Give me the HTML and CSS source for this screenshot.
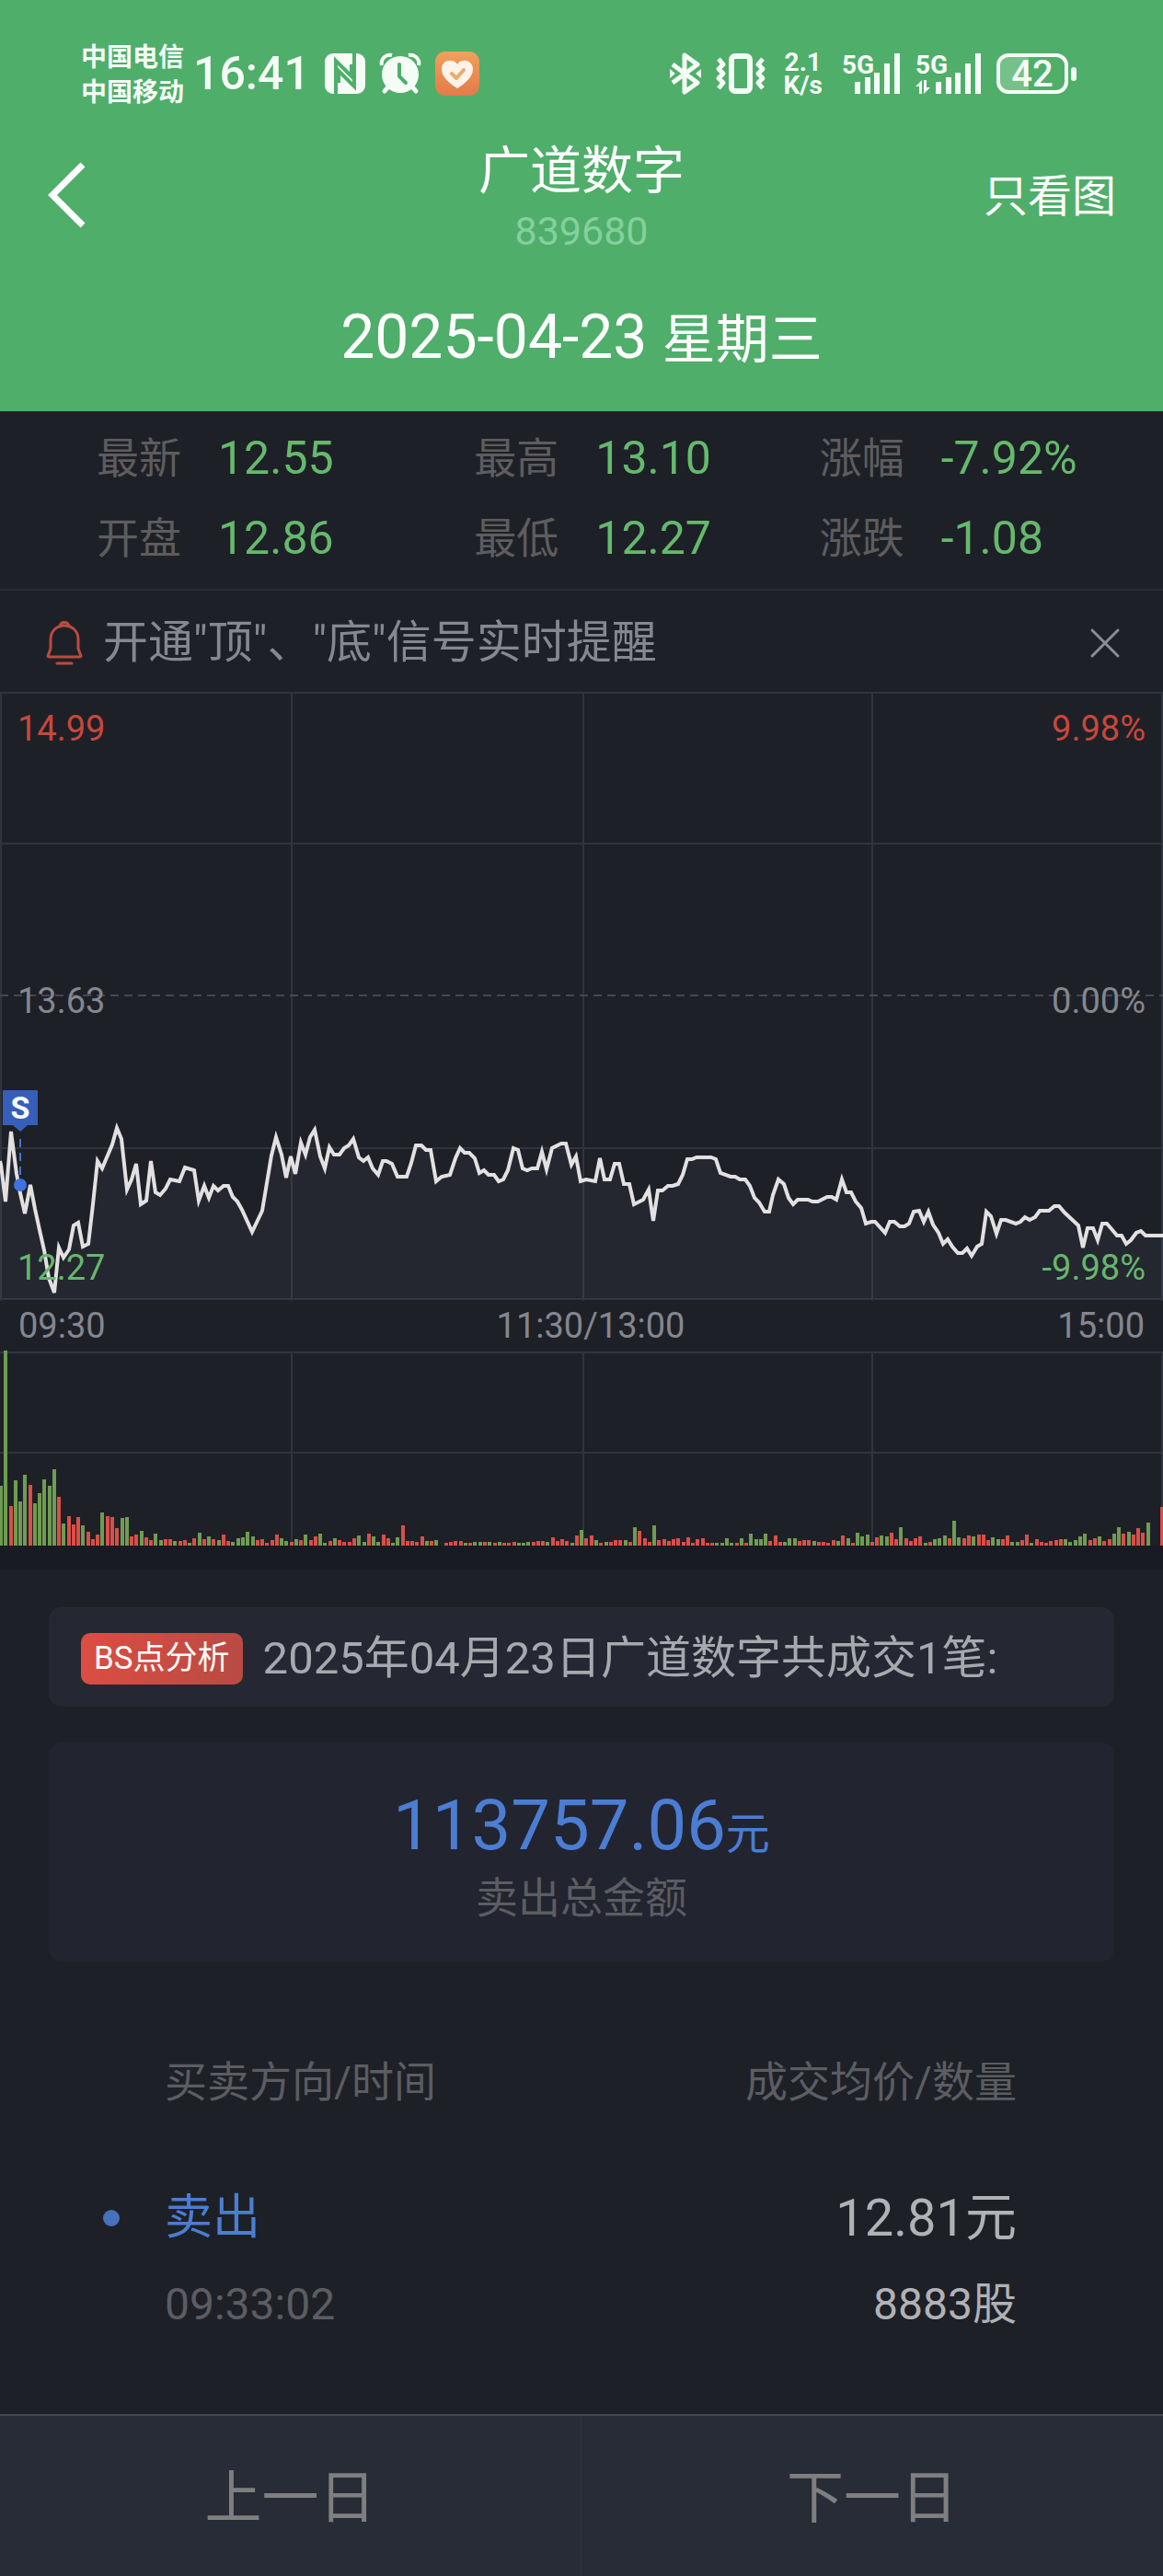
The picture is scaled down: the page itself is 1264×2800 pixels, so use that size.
FILE: index.html
```html
<!DOCTYPE html>
<html lang="zh-CN">
<head>
  <meta charset="UTF-8">
  <meta name="viewport" content="width=device-width, initial-scale=1.0">
  <title>广道数字 839680</title>
  <link rel="stylesheet" href="styles.css">
</head>
<body>
  <header class="header">
    <div class="status">
      <div class="carriers"><span>中国电信</span><span>中国移动</span></div>
      <span class="clock">16:41</span>
      <div class="status-left">
        <svg width="44" height="44" viewBox="0 0 44 44">
          <rect width="44" height="44" rx="9" fill="#f5fcf6"/>
          <path d="M12 44V8L29 25V12M32 0V36L15 19V32" fill="none" stroke="#4fae6a" stroke-width="4"/>
        </svg>
        <svg width="44" height="44" viewBox="0 0 44 44">
          <path d="M10 35L5 41M34 35l5 6" stroke="#f5fcf6" stroke-width="5" stroke-linecap="round"/>
          <circle cx="22" cy="23" r="20" fill="#f5fcf6"/>
          <path d="M2 13A9 9 0 0 1 13 2M42 13A9 9 0 0 0 31 2" fill="none" stroke="#f5fcf6" stroke-width="4"/>
          <path d="M21 12v13l7 7" fill="none" stroke="#4fae6a" stroke-width="4" stroke-linecap="round"/>
        </svg>
        <svg width="48" height="48" viewBox="0 0 48 48">
          <defs><linearGradient id="heartBg" x1="0" y1="0" x2="0" y2="1"><stop offset="0" stop-color="#efa15c"/><stop offset="1" stop-color="#e57a48"/></linearGradient></defs>
          <rect width="48" height="48" rx="11" fill="url(#heartBg)"/>
          <path d="M24 40C16 35 7 28 7 19c0-10 13-12 17-5 4-7 17-5 17 5 0 9-9 16-17 21z" fill="#fdf3ea"/>
          <path d="M18 24l5 5 8-9" fill="none" stroke="#e9ac6c" stroke-width="4" stroke-linecap="round" stroke-linejoin="round"/>
        </svg>
      </div>
      <div class="status-right">
        <svg width="34" height="44" viewBox="0 0 34 44">
          <path d="M3 12l27 20-14 10V2l14 10L3 32" fill="none" stroke="#f5fcf6" stroke-width="5" stroke-linejoin="round"/>
          <path d="M0 17l6 5-6 5zM34 17l-6 5 6 5z" fill="#f5fcf6"/>
        </svg>
        <svg width="54" height="46" viewBox="0 0 54 46">
          <rect x="17" y="4" width="20" height="38" rx="4" fill="none" stroke="#f5fcf6" stroke-width="6"/>
          <path d="M3 7l5 6-5 5 5 5-5 5 5 5-5 6M51 7l-5 6 5 5-5 5 5 5-5 5 5 6" fill="none" stroke="#f5fcf6" stroke-width="5" stroke-linejoin="round"/>
        </svg>
        <div class="net-speed"><span>2.1</span><span>K/s</span></div>
        <svg width="66" height="46" viewBox="0 0 66 46">
          <text class="net-type" x="2" y="23">5G</text>
          <path d="M19 45V32M30 45V27M40 45V22M51 45V12M62 45V1" stroke="#f5fcf6" stroke-width="6"/>
        </svg>
        <svg width="72" height="46" viewBox="0 0 72 46">
          <text class="net-type" x="0" y="23">5G</text>
          <path d="M25 45V32M36 45V27M46 45V22M57 45V12M68 45V1" stroke="#f5fcf6" stroke-width="6"/>
          <path d="M0 37l7-7v15H4v-8zM16 38l-7 7V30h3v8z" fill="#f5fcf6"/>
        </svg>
        <svg width="88" height="46" viewBox="0 0 88 46">
          <path d="M12 5H35V41H12Q4 41 4 32V14Q4 5 12 5z" fill="#76c08a"/>
          <rect x="2" y="3" width="74" height="40" rx="11" fill="none" stroke="#f5fcf6" stroke-width="4"/>
          <rect x="81" y="16" width="6" height="15" rx="3" fill="#f5fcf6"/>
          <text class="battery-level" x="39" y="37">42</text>
        </svg>
      </div>
    </div>

    <div class="nav">
      <button class="back" aria-label="返回">
        <svg width="44" height="72" viewBox="0 0 44 72"><path d="M39 3L6 36l33 33" fill="none" stroke="#fff" stroke-width="7"/></svg>
      </button>
      <div class="title">
        <h1>广道数字</h1>
        <p>839680</p>
      </div>
      <button class="only-chart">只看图</button>
    </div>
    <div class="date">2025-04-23 <span>星期三</span></div>
  </header>

  <dl class="quote">
    <div><dt>最新</dt><dd>12.55</dd></div>
    <div><dt>最高</dt><dd>13.10</dd></div>
    <div><dt>涨幅</dt><dd>-7.92%</dd></div>
    <div><dt>开盘</dt><dd>12.86</dd></div>
    <div><dt>最低</dt><dd>12.27</dd></div>
    <div><dt>涨跌</dt><dd>-1.08</dd></div>
  </dl>

  <div class="notice">
    <svg width="40" height="50" viewBox="0 0 40 50" fill="none" stroke="#bd4a3f" stroke-width="3" stroke-linecap="round" stroke-linejoin="round">
      <path d="M15 7c0-6 10-6 10 0M5 31V21C5 1 35 1 35 21V31L38 39Q38 40 36 40H4Q2 40 2 39zM12 47H28"/>
    </svg>
    <span class="notice-text">开通"顶"、"底"信号实时提醒</span>
    <button class="close" aria-label="关闭">
      <svg width="32" height="32" viewBox="0 0 32 32"><path d="M2 2l28 28M30 2L2 30" stroke="#8a8d95" stroke-width="3" stroke-linecap="round"/></svg>
    </button>
  </div>

  <section class="chart">
    <svg class="plot" viewBox="0 0 1264 662">
      <path class="grid" d="M0 1H1264M0 165H1264M0 496H1264M0 660H1264M1 0V662M317 0V662M634 0V662M948 0V662M1263 0V662"/>
      <path class="grid dashed" d="M0 330H1264"/>
      <polygon id="priceArea" class="area"/>
      <polyline id="priceLine" class="line"/>
      <path d="M22 486V530" stroke="#4672cc" stroke-width="2" stroke-dasharray="9 6"/>
      <circle cx="22" cy="536" r="7" fill="#3f72de"/>
      <path d="M4 433H40Q41 433 41 434V471H30L22 478L14 471H3V434Q3 433 4 433z" fill="#365fba"/>
      <text class="mark" x="22" y="464">S</text>
    </svg>
    <span class="tick top left up">14.99</span>
    <span class="tick top right up">9.98%</span>
    <span class="tick middle left">13.63</span>
    <span class="tick middle right">0.00%</span>
    <span class="tick bottom left down">12.27</span>
    <span class="tick bottom right down">-9.98%</span>
  </section>
  <div class="times"><span>09:30</span><span class="noon">11:30/13:00</span><span>15:00</span></div>
  <section class="volume">
    <svg class="plot" viewBox="0 0 1264 212">
      <path class="grid" d="M0 2H1264M0 111H1264M317 2V212M634 2V212M948 2V212M1263 2V212"/>
      <path id="volDown" class="vol-down"/>
      <path id="volUp" class="vol-up"/>
    </svg>
  </section>

  <main class="analysis">
    <div class="summary">
      <span class="tag">BS点分析</span>
      <span class="summary-text">2025年04月23日广道数字共成交1笔:</span>
    </div>
    <div class="amount">
      <p class="amount-value">113757.06<small>元</small></p>
      <p class="amount-label">卖出总金额</p>
    </div>
    <table class="trades">
      <thead>
        <tr><th scope="col">买卖方向/时间</th><th scope="col">成交均价/数量</th></tr>
      </thead>
      <tbody>
        <tr class="trade"><td class="side">卖出</td><td class="price">12.81元</td></tr>
        <tr class="trade-sub"><td class="time">09:33:02</td><td class="count">8883股</td></tr>
      </tbody>
    </table>
  </main>

  <footer class="pager">
    <button>上一日</button>
    <button>下一日</button>
  </footer>

  <script>
    const points = '0,510 1,514 6,554 12,478 18,524 22,545 27,567 33,536 38,562 43,585 48,607 53,637 59,653 64,604 69,615 75,606 80,580 85,577 90,603 96,600 ' +
      '101,557 106,510 111,518 122,492 127,474 132,486 138,541 143,530 148,513 153,557 159,553 164,510 169,544 174,547 180,540 185,530 195,532 201,517 211,520 216,553 ' +
      '222,537 227,550 232,537 237,542 243,537 248,537 253,549 258,554 263,563 274,587 285,564 295,504 300,484 306,503 311,528 316,505 321,524 327,490 332,503 337,484 ' +
      '342,476 348,505 353,518 358,495 363,503 369,503 374,496 379,493 384,486 390,506 395,510 400,506 405,518 411,525 416,510 420,510 426,513 432,527 442,527 447,512 ' +
      '452,493 458,493 463,498 468,498 474,532 480,527 489,525 495,507 500,496 505,501 510,501 516,507 521,523 526,520 531,525 537,525 542,532 547,530 552,520 558,496 ' +
      '563,498 568,518 573,520 578,518 584,518 589,500 594,519 600,496 610,491 615,491 621,514 626,505 631,532 637,530 647,532 652,507 657,530 663,530 668,513 673,513 ' +
      '678,535 684,535 689,557 699,552 705,541 710,575 715,542 720,542 726,537 731,537 737,535 742,525 747,508 752,508 757,506 773,506 778,508 783,523 794,527 799,527 ' +
      '804,530 810,530 815,537 820,550 825,555 831,565 836,565 840,547 846,530 852,535 857,550 862,557 867,552 878,552 883,554 889,554 899,549 904,549 909,552 915,530 ' +
      '920,544 925,544 930,554 936,561 941,578 947,576 951,576 962,588 967,576 972,576 978,581 983,581 988,578 993,565 999,564 1004,576 1009,565 1014,579 1020,588 ' +
      '1025,600 1030,595 1035,603 1041,610 1046,610 1051,605 1056,613 1062,603 1067,600 1072,565 1077,570 1083,589 1088,574 1093,574 1104,578 1109,576 1114,571 1119,574 ' +
      '1125,571 1130,564 1140,564 1146,559 1151,559 1157,566 1172,580 1177,604 1182,583 1188,583 1193,596 1198,578 1203,578 1209,585 1214,591 1219,591 1224,600 1229,596 ' +
      '1235,588 1240,586 1245,591 1264,591';
    document.getElementById('priceLine').setAttribute('points', points);
    document.getElementById('priceArea').setAttribute('points', '0,660 ' + points + ' 1264,660');

    // one bar per minute, negative = price fell
    const volumes = [
      -65, -212, 43, -71, -48, -77, 66, -46, -57, -72, -65, -83, 53, -24, 32, 23, 31, -22, 15, 7,
      12, -36, 32, 31, 19, -30, -31, 10, 12, -16, 9, 6, -13, -6, 7, 7, -5, 5, 6, -3,
      8, -14, 7, -10, 7, -6, 12, 5, -4, -8, -9, -15, -10, 6, 7, 3, 6, 12, -8, -5,
      4, -7, 6, -12, 6, 10, -13, -3, 5, -8, 6, 4, 4, 8, -11, -4, 13, -10, -4, 12,
      8, -3, -9, 22, 5, 5, 4, 10, -5, 5, -6, 0, 3, 4, 5, 5, -3, 3, -4, -4,
      4, -4, 3, -4, 3, 3, 4, -3, -3, -4, 4, 5, 5, -4, 9, 5, 7, 5, -3, 11,
      -17, 8, 11, -6, 3, -4, 4, 6, 6, -6, 4, -20, 16, 8, 4, -22, 6, 7, 5, 7,
      8, 4, 9, 3, 7, 8, 3, 3, -3, -3, -8, -3, 3, -8, 3, -13, -7, -7, -13, 5,
      11, 4, -4, -8, -8, 5, 6, 6, -5, 4, 4, 3, 6, -5, 11, -8, 3, -14, -10, -12,
      4, 9, -11, -10, 14, 7, -20, 8, 5, 8, 10, -3, 4, -7, -8, -11, 8, -27, -9, 8,
      11, -10, 12, 12, 6, -9, -7, 7, 11, -4, -4, 6, 12, -3, 7, 4, 3, 5, 6, 7,
      -7, -4, -6, -10, -13, 6, 8, -10, 5, 7, -13, -20, 13, -15, 12, 19, 14, -25, 0, 0,
      42
    ];
    let up = '';
    let down = '';
    volumes.forEach((v, i) => {
      if (v === 0) return;
      const bar = `M${Math.round(i * 5.26 + 1)} 212v${-Math.abs(v)}`;
      if (v > 0) up += bar;
      else down += bar;
    });
    document.getElementById('volUp').setAttribute('d', up);
    document.getElementById('volDown').setAttribute('d', down);
  </script>
</body>
</html>
```

FILE: styles.css
```css
* {
  box-sizing: border-box;
}
body {
  margin: 0;
  min-height: 100vh;
  display: flex;
  flex-direction: column;
  background: #1e2027;
  color: #a7a9ae;
  font-family: Roboto, "Noto Sans CJK SC", sans-serif;
}
h1, p, dl, dd {
  margin: 0;
  font-weight: 400;
}
button {
  padding: 0;
  border: 0;
  background: none;
  color: inherit;
  font: inherit;
  cursor: pointer;
}
svg {
  display: block;
  overflow: visible;
}

/* header */
.header {
  background: #4fae6a;
  color: #fff;
  padding-bottom: 40px;
}
.status {
  display: flex;
  align-items: center;
  height: 140px;
  padding: 20px 93px 0 88px;
  color: #f5fcf6;
}
.carriers {
  display: flex;
  flex-direction: column;
  padding-top: 4px;
  font-size: 28px;
  line-height: 38px;
  font-weight: 700;
}
.clock {
  margin: 0 16px 0 10px;
  font-size: 50px;
  font-weight: 500;
}
.status-left, .status-right {
  display: flex;
  align-items: center;
  gap: 16px;
}
.status-right {
  margin-left: auto;
}
.net-speed {
  display: flex;
  flex-direction: column;
  align-items: center;
  margin: 0 3px;
  font-size: 28px;
  line-height: 25px;
  font-weight: 700;
}
.net-type {
  font-size: 28px;
  font-weight: 700;
  fill: #f5fcf6;
}
.battery-level {
  font-size: 40px;
  font-weight: 500;
  fill: #f5fcf6;
  text-anchor: middle;
}
.nav {
  display: grid;
  grid-template-columns: 1fr auto 1fr;
  align-items: center;
  height: 144px;
  padding: 0 51px;
}
.back {
  justify-self: start;
}
.title {
  padding-top: 7px;
  text-align: center;
}
.title h1 {
  font-size: 56px;
  line-height: 70px;
}
.title p {
  font-size: 43px;
  line-height: 60px;
  color: #85d09e;
}
.only-chart {
  justify-self: end;
  padding-top: 4px;
  font-size: 48px;
  line-height: 48px;
}
.date {
  margin-top: 43px;
  text-align: center;
  font-size: 66px;
  line-height: 80px;
}
.date span {
  font-size: 58px;
  line-height: 58px;
}

/* quote */
.quote {
  display: grid;
  grid-template-columns: 410fr 375fr 373fr;
  padding: 8px 0 11px 105px;
  border-bottom: 2px solid #2a2d36;
  line-height: 87px;
}
.quote div {
  display: flex;
  gap: 40px;
}
.quote dt {
  font-size: 46px;
  color: #5d5d5e;
}
.quote dd {
  font-size: 50px;
  color: #65b96c;
}

.notice {
  display: flex;
  align-items: center;
  height: 110px;
  padding: 3px 47px 0 50px;
  color: #858890;
}
.notice-text {
  margin-left: 22px;
  font-size: 49px;
  line-height: 58px;
}
.close {
  margin-left: auto;
}

/* charts */
.chart {
  position: relative;
}
.plot {
  width: 100%;
  height: auto;
}
.grid {
  fill: none;
  stroke: #30343f;
  stroke-width: 2;
}
.dashed {
  stroke: #454851;
  stroke-dasharray: 9 6;
}
.area {
  fill: rgba(200, 220, 255, 0.04);
}
.line {
  fill: none;
  stroke: #e3e0e2;
  stroke-width: 4;
}
.mark {
  font-size: 34px;
  font-weight: 700;
  fill: #fff;
  text-anchor: middle;
}
.tick {
  position: absolute;
  font-size: 38px;
  line-height: 48px;
  color: #84878f;
}
.left { left: 19px; }
.right { right: 19px; }
.top { top: 16px; }
.middle { top: 312px; }
.bottom { bottom: 12px; }
.up { color: #c8473b; }
.down { color: #68b66e; }
.times {
  display: grid;
  grid-template-columns: 1fr auto 1fr;
  padding: 1px 20px 0;
  font-size: 38px;
  line-height: 53px;
  color: #84878f;
}
.times .noon {
  padding-left: 20px;
}
.times span:last-child {
  text-align: right;
}
.volume {
  border-bottom: 26px solid #191b24;
}
.vol-up, .vol-down {
  fill: none;
  stroke-width: 4;
}
.vol-up { stroke: #d94f48; }
.vol-down { stroke: #6f9c52; }

/* analysis */
.analysis {
  padding: 41px 53px 0;
}
.summary {
  display: flex;
  align-items: center;
  gap: 22px;
  height: 108px;
  padding: 3px 35px 0;
  border-radius: 14px;
  background: #252833;
}
.summary-text {
  font-size: 49px;
  line-height: 56px;
}
.tag {
  padding: 0 14px;
  border-radius: 10px;
  background: linear-gradient(90deg, #dc4d42, #b84b43);
  color: #fff;
  font-size: 35px;
  line-height: 56px;
}
.amount {
  margin-top: 39px;
  padding: 40px 0;
  border-radius: 14px;
  background: #222430;
  text-align: center;
}
.amount-value {
  font-size: 76px;
  line-height: 100px;
  color: #4b7dd3;
}
.amount-value small {
  font-size: 48px;
  line-height: 48px;
}
.amount-label {
  font-size: 46px;
  line-height: 58px;
  color: #5b5d62;
}
.trades {
  width: 100%;
  margin-top: 91px;
  border-collapse: collapse;
}
.trades th, .trades td {
  padding: 0 0 0 126px;
  text-align: left;
}
.trades th:last-child, .trades td:last-child {
  padding-left: 0;
  padding-right: 106px;
  text-align: right;
}
.trades th {
  font-size: 46px;
  line-height: 80px;
  font-weight: 400;
  color: #5b5d62;
}
.trades .trade td {
  padding-top: 61px;
  line-height: 94px;
}
.trade .side {
  font-size: 52px;
  color: #4b7dd3;
}
.side::before {
  content: "";
  float: left;
  width: 18px;
  height: 18px;
  margin: 38px 0 0 -67px;
  border-radius: 50%;
  background: #4671bd;
}
.price {
  font-size: 56px;
  color: #b0b2b5;
}
.trade-sub td {
  line-height: 94px;
}
.time, .count {
  font-size: 48px;
}
.time {
  color: #5b5d62;
}
.count {
  color: #b0b2b5;
}

/* footer */
.pager {
  display: grid;
  grid-template-columns: 1fr 1fr;
  margin-top: auto;
  border-top: 2px solid #43464f;
  background: #272c37;
}
.pager button {
  height: 174px;
  padding-top: 6px;
  font-size: 62px;
  line-height: 80px;
  color: #7f7f80;
}
.pager button:first-child {
  border-right: 1px solid #30343f;
}
```
